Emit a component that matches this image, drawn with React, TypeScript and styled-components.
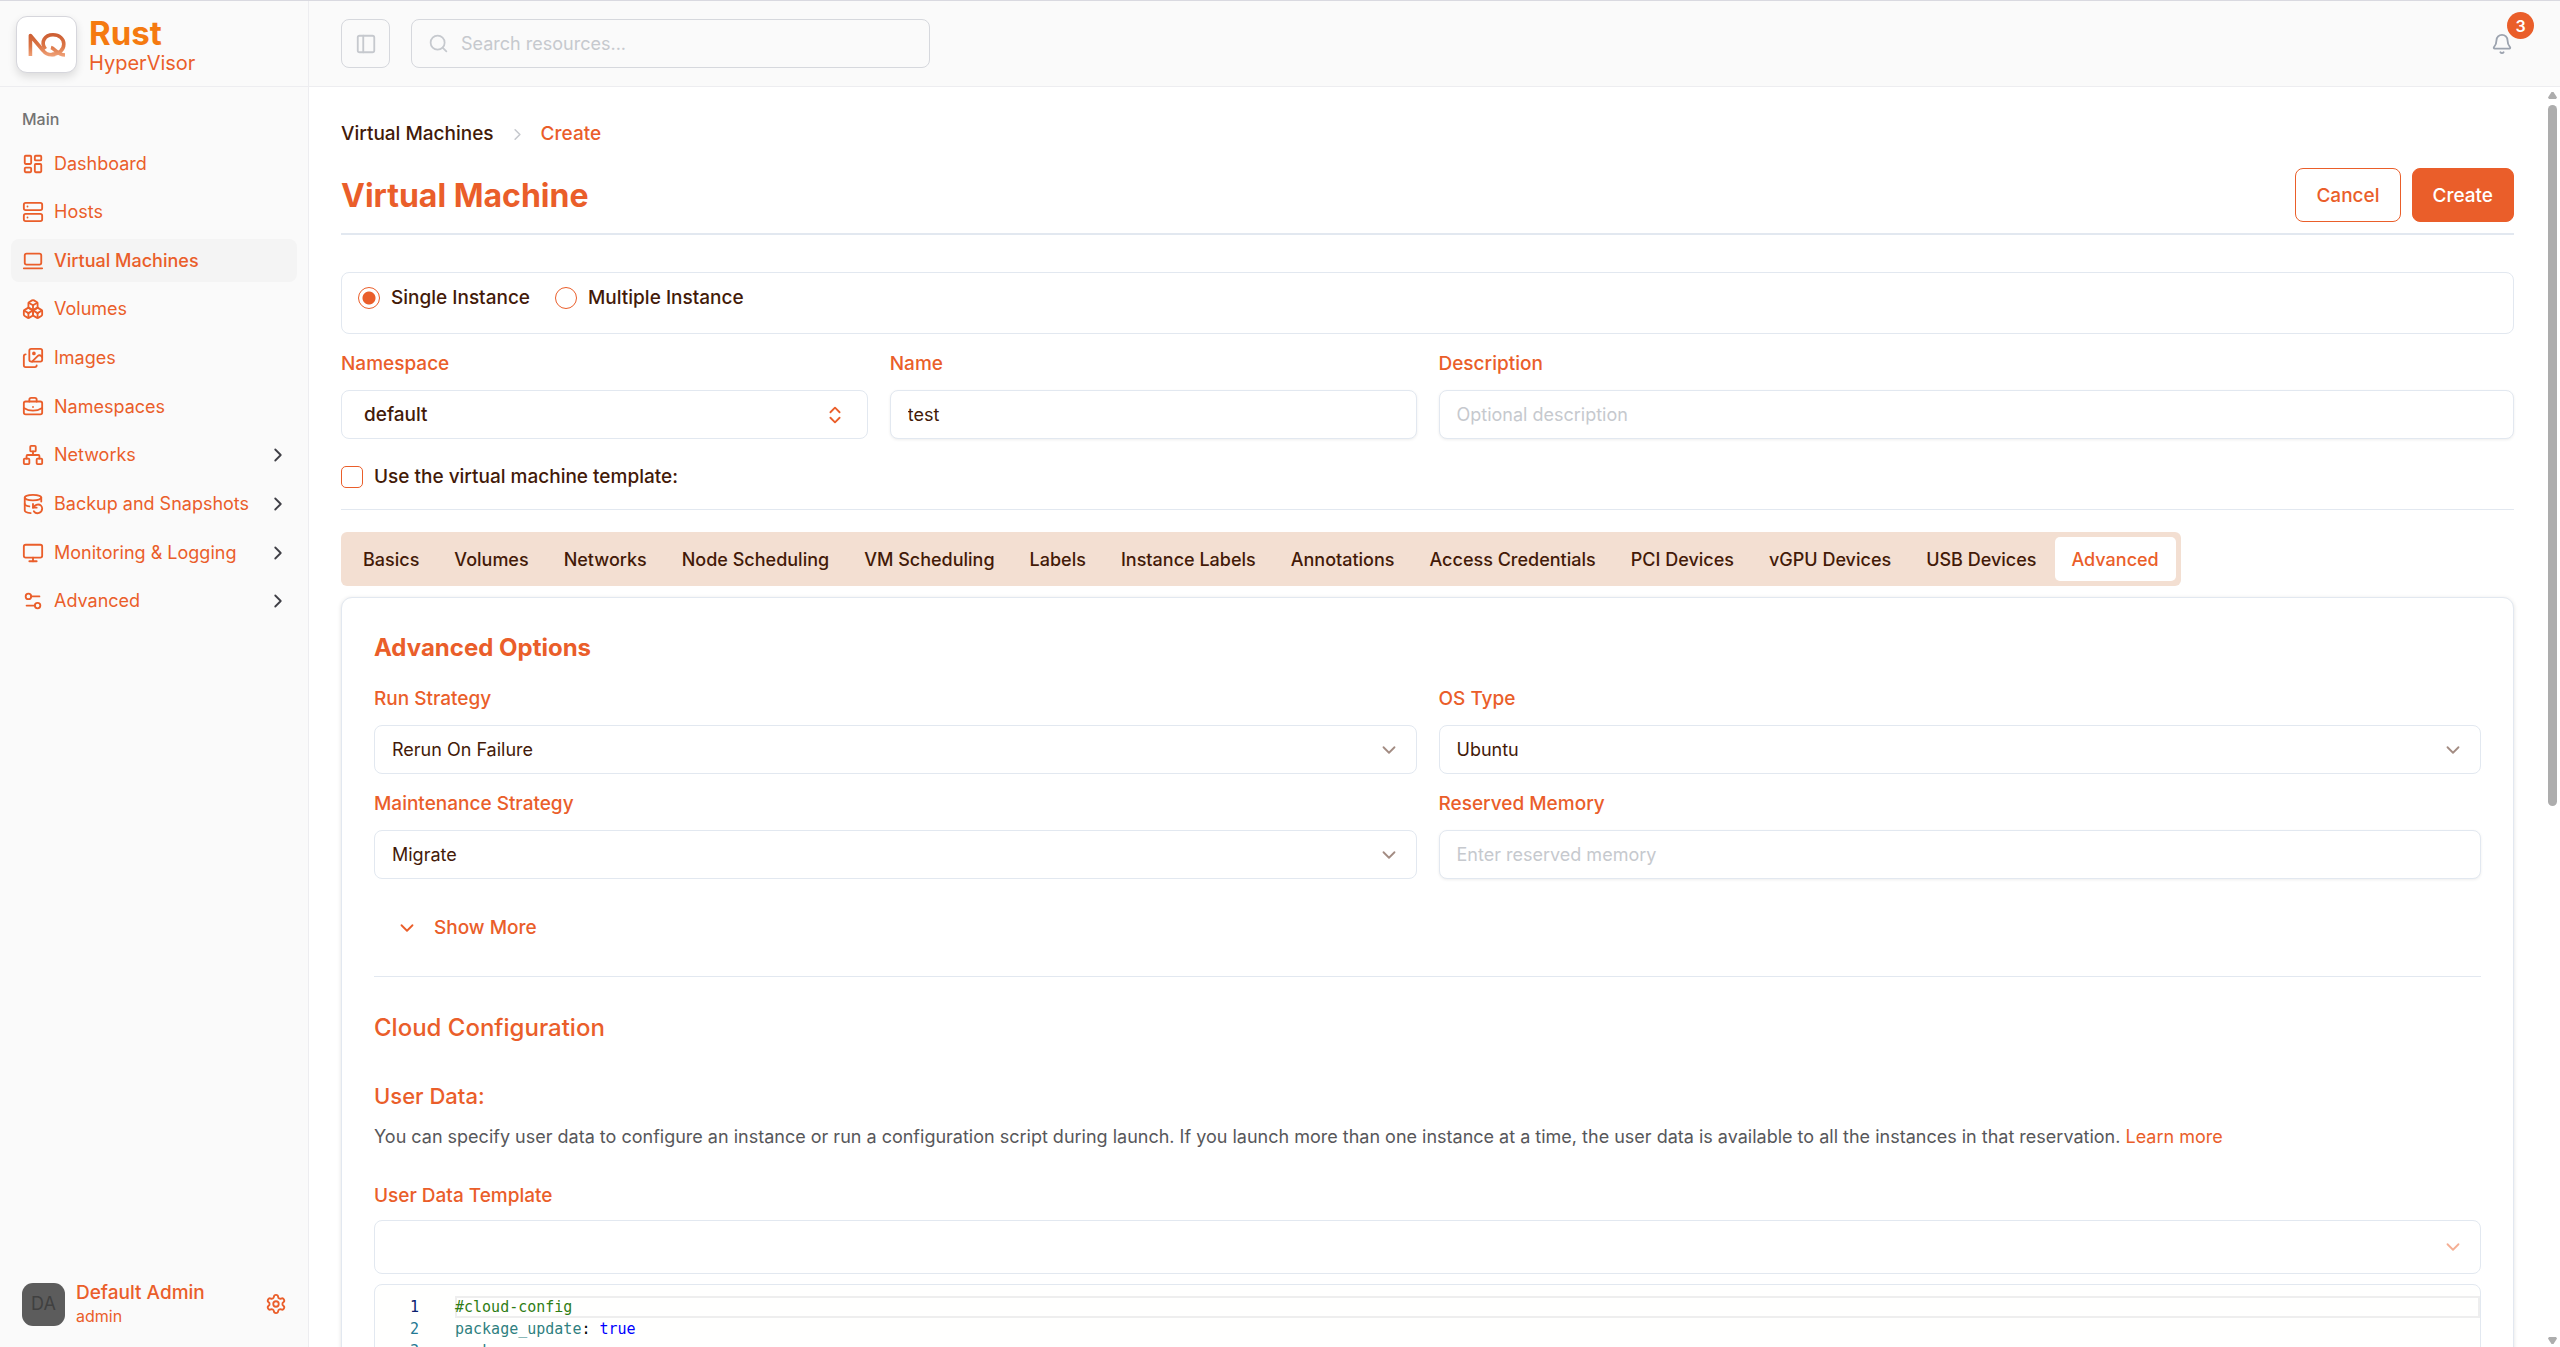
import React, { useState } from "react";
import styled, { createGlobalStyle } from "styled-components";
import {
  Bell,
  Boxes,
  BriefcaseBusiness,
  ChevronDown,
  ChevronRight,
  ChevronsUpDown,
  DatabaseBackup,
  Images,
  LaptopMinimal,
  LayoutDashboard,
  Monitor,
  Network,
  PanelLeft,
  Search,
  Server,
  Settings,
  Settings2,
  type LucideIcon,
} from "lucide-react";

const color = {
  accent: "#ea5e2a",
  brand: "#f57a10",
  ink: "#431a08",
  muted: "#737373",
  body: "#57575a",
  line: "#e2e8f0",
  chrome: "#fafafa",
  chromeLine: "#ededf0",
  faint: "#c6c9ce",
};

const GlobalStyle = createGlobalStyle`
  *, *::before, *::after { box-sizing: border-box; }
  body { margin: 0; background: #fff; }
  body, button, input, select {
    font-family: Inter, "Liberation Sans", sans-serif;
    font-size: 18px;
    line-height: 28px;
  }
  h1, h2, h3, p, ul, ol, nav { margin: 0; padding: 0; }
  ul, ol { list-style: none; }
  a { color: inherit; text-decoration: none; }
  svg { flex: none; }
`;

const Shell = styled.div`
  display: flex;
  height: 100vh;
  overflow: hidden;
  border-top: 1px solid #d9d9e0;
  color: ${color.ink};
`;

const Sidebar = styled.aside`
  display: flex;
  flex-direction: column;
  flex: none;
  width: 309px;
  background: ${color.chrome};
  border-right: 1px solid ${color.chromeLine};
`;

const Brand = styled.a`
  display: flex;
  align-items: center;
  gap: 12px;
  height: 86px;
  padding: 2px 16px 0;
  border-bottom: 1px solid ${color.chromeLine};
`;

const LogoTile = styled.span`
  display: grid;
  place-items: center;
  width: 61px;
  height: 57px;
  border: 1px solid #d6d6dc;
  border-radius: 11px;
  background: #fff;
  box-shadow: 0 4px 8px rgba(0, 0, 0, 0.12);
`;

const BrandText = styled.span`
  display: flex;
  flex-direction: column;
  padding-top: 4px;
`;

const BrandName = styled.strong`
  color: ${color.brand};
  font-size: 33px;
  font-weight: 700;
  line-height: 32px;
`;

const BrandSub = styled.span`
  color: ${color.accent};
  font-size: 20px;
  line-height: 28px;
`;

const NavGroup = styled.nav`
  flex: 1;
  padding: 18px 11px;
`;

const NavHeading = styled.div`
  padding: 0 11px 9px;
  color: ${color.muted};
  font-size: 16px;
  font-weight: 500;
`;

const NavList = styled.ul`
  display: flex;
  flex-direction: column;
  justify-content: space-between;
  height: 481px;
`;

const NavLink = styled.a<{ $active?: boolean }>`
  display: flex;
  align-items: center;
  gap: 10px;
  height: 43px;
  padding: 0 8px 0 11px;
  border-radius: 8px;
  color: ${color.accent};
  font-weight: ${(p) => (p.$active ? 500 : 400)};
  background: ${(p) => (p.$active ? "#f4f4f4" : "transparent")};
  white-space: nowrap;

  span { flex: 1; }
  svg:last-child:not(:first-child) { color: #3f3f46; }
`;

const Account = styled.div`
  display: flex;
  align-items: center;
  gap: 11px;
  padding: 0 21px 20px 22px;
  color: ${color.accent};
`;

const Avatar = styled.span`
  display: grid;
  place-items: center;
  width: 43px;
  height: 43px;
  border-radius: 11px;
  background: #5c5c5c;
  color: #404040;
`;

const AccountText = styled.div`
  display: flex;
  flex: 1;
  flex-direction: column;
  font-size: 19px;
  font-weight: 500;
  line-height: 24px;

  small {
    font-size: 16px;
    font-weight: 400;
    line-height: 22px;
  }
`;

const IconButton = styled.button<{ $framed?: boolean }>`
  display: grid;
  place-items: center;
  width: ${(p) => (p.$framed ? "49px" : "22px")};
  height: ${(p) => (p.$framed ? "49px" : "22px")};
  padding: 0;
  border: ${(p) => (p.$framed ? "1px solid #d6d8dd" : "0")};
  border-radius: 8px;
  background: transparent;
  color: inherit;
`;

const Column = styled.div`
  display: flex;
  flex: 1;
  flex-direction: column;
  min-width: 0;
`;

const TopBar = styled.header`
  display: flex;
  flex: none;
  align-items: center;
  gap: 21px;
  height: 86px;
  padding: 0 47px 0 32px;
  background: ${color.chrome};
  border-bottom: 1px solid ${color.chromeLine};
  color: ${color.faint};
`;

const SearchBox = styled.label`
  display: flex;
  align-items: center;
  gap: 12px;
  width: 519px;
  height: 49px;
  padding: 0 16px;
  border: 1px solid #d6d8dd;
  border-radius: 8px;

  input {
    flex: 1;
    min-width: 0;
    padding: 0;
    border: 0;
    outline: 0;
    background: transparent;
    color: ${color.ink};
  }
  input::placeholder { color: ${color.faint}; }
`;

const Alerts = styled.div`
  position: relative;
  margin-left: auto;
  color: #9ca3af;
`;

const Badge = styled.span`
  position: absolute;
  left: 16px;
  bottom: 16px;
  display: grid;
  place-items: center;
  width: 27px;
  height: 27px;
  border-radius: 50%;
  background: ${color.accent};
  color: #fff;
  font-size: 16px;
  font-weight: 600;
`;

const Viewport = styled.div`
  display: flex;
  flex: 1;
  min-height: 0;
`;

const Main = styled.main`
  flex: 1;
  min-width: 0;
  overflow: hidden;
  padding: 33px 31px 0 32px;
`;

const ScrollTrack = styled.div`
  display: flex;
  flex: none;
  flex-direction: column;
  align-items: center;
  gap: 6px;
  width: 15px;
  padding: 5px 0 3px;
  color: #adadad;

  svg:last-child { margin-top: auto; }
`;

const ScrollThumb = styled.div`
  width: 9px;
  height: 56%;
  border-radius: 5px;
  background: currentColor;
`;

const Crumbs = styled.ol`
  display: flex;
  align-items: center;
  gap: 14px;
  font-size: 19px;
  font-weight: 500;

  svg { display: block; color: ${color.faint}; }
  [aria-current] { color: ${color.accent}; }
`;

const TitleRow = styled.div`
  display: flex;
  align-items: center;
  justify-content: space-between;
  margin-top: 20px;
  padding-bottom: 11px;
  border-bottom: 2px solid ${color.line};

  h1 {
    padding-top: 2px;
    color: ${color.accent};
    font-size: 32px;
    font-weight: 700;
    line-height: 44px;
  }
`;

const Actions = styled.div`
  display: flex;
  gap: 11px;
`;

const Button = styled.button<{ $primary?: boolean }>`
  height: 54px;
  padding: 2px 20px 0;
  border: 1px solid ${color.accent};
  border-radius: 8px;
  background: ${(p) => (p.$primary ? color.accent : "#fff")};
  color: ${(p) => (p.$primary ? "#fff" : color.accent)};
  font-size: 19px;
  font-weight: 500;
`;

const InstanceBox = styled.fieldset`
  display: flex;
  align-items: flex-start;
  gap: 25px;
  height: 62px;
  margin: 37px 0 16px;
  padding: 11px 16px;
  border: 1px solid ${color.line};
  border-radius: 8px;
`;

const Choice = styled.label`
  display: flex;
  align-items: center;
  gap: 11px;
  font-size: 19px;
  font-weight: 500;

  input {
    appearance: none;
    flex: none;
    width: 22px;
    height: 22px;
    margin: 0;
    border: 1px solid ${color.accent};
    background: #fff;
  }
  input[type="radio"] { border-radius: 50%; }
  input[type="checkbox"] { border-radius: 5px; }
  input[type="radio"]:checked {
    background: radial-gradient(circle, ${color.accent} 6px, #fff 7px);
  }
  input[type="checkbox"]:checked { background: ${color.accent}; }
`;

const TemplateRow = styled.div`
  margin-bottom: 22px;
  padding: 24px 0 18px;
  border-bottom: 1px solid ${color.line};
`;

const FieldGrid = styled.div<{ $columns: number }>`
  display: grid;
  grid-template-columns: repeat(${(p) => p.$columns}, minmax(0, 1fr));
  gap: 16px 22px;
`;

const Field = styled.div<{ $span?: number; $gap?: number }>`
  display: flex;
  flex-direction: column;
  gap: ${(p) => p.$gap ?? 12}px;
  grid-column: span ${(p) => p.$span ?? 1};

  label {
    color: ${color.accent};
    font-size: 19px;
    font-weight: 500;
  }
`;

const TextInput = styled.input`
  width: 100%;
  height: 49px;
  padding: 0 17px;
  border: 1px solid ${color.line};
  border-radius: 8px;
  background: #fff;
  color: ${color.ink};
  box-shadow: 0 1px 3px rgba(0, 0, 0, 0.07);
  outline: 0;

  &::placeholder { color: ${color.faint}; opacity: 1; }
`;

const SelectFrame = styled.div<{ $tone: string; $inset: number }>`
  position: relative;

  svg {
    position: absolute;
    top: 50%;
    right: ${(p) => p.$inset}px;
    transform: translateY(-50%);
    color: ${(p) => p.$tone};
    pointer-events: none;
  }
`;

const SelectControl = styled.select<{ $tall?: boolean; $pad?: number; $medium?: boolean }>`
  display: block;
  appearance: none;
  width: 100%;
  height: ${(p) => (p.$tall ? 54 : 49)}px;
  padding: 0 ${(p) => p.$pad ?? 17}px;
  border: 1px solid ${color.line};
  border-radius: 8px;
  background: #fff;
  color: ${color.ink};
  font-size: ${(p) => (p.$medium ? 19 : 18)}px;
  font-weight: ${(p) => (p.$medium ? 500 : 400)};
  outline: 0;
`;

const TabList = styled.div`
  display: flex;
  gap: 1px;
  width: fit-content;
  padding: 5px;
  border-radius: 6px;
  background: #f3dfd2;
`;

const Tab = styled.button<{ $active?: boolean }>`
  height: 44px;
  padding: 2px 17px 0;
  border: 0;
  border-radius: 5px;
  background: ${(p) => (p.$active ? "#fff" : "transparent")};
  color: ${(p) => (p.$active ? color.accent : color.ink)};
  font-weight: 500;
  white-space: nowrap;
`;

const Card = styled.section`
  margin-top: 11px;
  padding: 34px 32px;
  border: 1px solid ${color.line};
  border-radius: 11px;
  background: #fff;
  box-shadow: 0 1px 4px rgba(0, 0, 0, 0.12);
`;

const SectionTitle = styled.h2<{ $strong?: boolean }>`
  color: ${color.accent};
  font-size: 24px;
  font-weight: ${(p) => (p.$strong ? 700 : 500)};
  line-height: 32px;
  margin-bottom: ${(p) => (p.$strong ? 21 : 37)}px;
`;

const ShowMore = styled.button`
  display: flex;
  align-items: center;
  gap: 16px;
  height: 48px;
  margin: 25px 0 24px;
  padding: 0 22px;
  border: 0;
  background: transparent;
  color: ${color.accent};
  font-size: 19px;
  font-weight: 500;
`;

const Divider = styled.hr`
  height: 1px;
  margin: 0 0 35px;
  border: 0;
  background: ${color.line};
`;

const SubTitle = styled.h3`
  margin-bottom: 12px;
  color: ${color.accent};
  font-size: 22px;
  font-weight: 500;
  line-height: 30px;
`;

const Hint = styled.p`
  margin-bottom: 31px;
  color: ${color.body};

  a { color: ${color.accent}; }
`;

const Editor = styled.div`
  margin-top: 10px;
  padding: 11px 0;
  border: 1px solid ${color.line};
  border-radius: 8px;
  background: #fffffe;
  font-family: "DejaVu Sans Mono", monospace;
  font-size: 15px;
`;

const CodeLine = styled.div<{ $current?: boolean }>`
  display: grid;
  grid-template-columns: 44px 1fr;
  column-gap: 36px;
  line-height: 22px;

  > span {
    color: ${(p) => (p.$current ? "#0b216f" : "#237893")};
    text-align: right;
  }
  > code {
    font: inherit;
    box-shadow: ${(p) => (p.$current ? "inset 0 0 0 2px #eee" : "none")};
  }
`;

const Token = styled.span<{ $kind: "comment" | "key" | "value" | "plain" }>`
  color: ${(p) => ({ comment: "#2f7d15", key: "#2f7f80", value: "#0000ff", plain: "#000" })[p.$kind]};
`;

const navItems: { label: string; icon: LucideIcon; active?: boolean; nested?: boolean }[] = [
  { label: "Dashboard", icon: LayoutDashboard },
  { label: "Hosts", icon: Server },
  { label: "Virtual Machines", icon: LaptopMinimal, active: true },
  { label: "Volumes", icon: Boxes },
  { label: "Images", icon: Images },
  { label: "Namespaces", icon: BriefcaseBusiness },
  { label: "Networks", icon: Network, nested: true },
  { label: "Backup and Snapshots", icon: DatabaseBackup, nested: true },
  { label: "Monitoring & Logging", icon: Monitor, nested: true },
  { label: "Advanced", icon: Settings2, nested: true },
];

const tabs = [
  "Basics",
  "Volumes",
  "Networks",
  "Node Scheduling",
  "VM Scheduling",
  "Labels",
  "Instance Labels",
  "Annotations",
  "Access Credentials",
  "PCI Devices",
  "vGPU Devices",
  "USB Devices",
  "Advanced",
];

function Logo() {
  return (
    <svg width="38" height="26" viewBox="0 0 38 26" fill="none" aria-hidden="true">
      <defs>
        <linearGradient id="logo-fill" x1="0" y1="0" x2="0" y2="26" gradientUnits="userSpaceOnUse">
          <stop offset="0" stopColor="#c95a30" />
          <stop offset="0.55" stopColor="#dc7646" />
          <stop offset="1" stopColor="#f3a981" />
        </linearGradient>
      </defs>
      <g stroke="url(#logo-fill)" strokeWidth="3.6" strokeLinejoin="round">
        <path d="M2.4 24V3.5L15 18.500C18 22.500 22 23.500 27 22.400" />
        <path d="M17.500 17C12 10 17 2.800 25 2.800C31.500 2.800 35.800 7 35.800 12C35.800 18 31 22.400 23.500 22.400" />
        <path d="M23 15.500C27 16.500 29 22.800 37 23" />
      </g>
    </svg>
  );
}

function Arrow({ down }: { down?: boolean }) {
  return (
    <svg width="9" height="7" viewBox="0 0 9 7" aria-hidden="true">
      <path
        d={down ? "M1 0h7l1 1.500L5.500 7h-2L0 1.500z" : "M1 7h7l1-1.500L5.500 0h-2L0 5.500z"}
        fill="currentColor"
      />
    </svg>
  );
}

interface SelectProps {
  id: string;
  label: string;
  value: string;
  tone?: string;
  tall?: boolean;
}

function SelectField({ id, label, value, tone = "#a38c83", tall }: SelectProps) {
  return (
    <Field $gap={tall ? 10 : 12}>
      <label htmlFor={id}>{label}</label>
      <SelectFrame $tone={tone} $inset={17}>
        <SelectControl id={id} $tall={tall} defaultValue={value}>
          <option value={value}>{value}</option>
        </SelectControl>
        <ChevronDown size={22} strokeWidth={2} />
      </SelectFrame>
    </Field>
  );
}

export default function App() {
  const [mode, setMode] = useState("single");
  const [tab, setTab] = useState("Advanced");

  return (
    <Shell>
      <GlobalStyle />
      <Sidebar>
        <Brand href="#home">
          <LogoTile>
            <Logo />
          </LogoTile>
          <BrandText>
            <BrandName>Rust</BrandName>
            <BrandSub>HyperVisor</BrandSub>
          </BrandText>
        </Brand>
        <NavGroup aria-label="Main">
          <NavHeading>Main</NavHeading>
          <NavList>
            {navItems.map(({ label, icon: Icon, active, nested }) => (
              <li key={label}>
                <NavLink href="#nav" $active={active}>
                  <Icon size={22} />
                  <span>{label}</span>
                  {nested && <ChevronRight size={22} />}
                </NavLink>
              </li>
            ))}
          </NavList>
        </NavGroup>
        <Account>
          <Avatar>DA</Avatar>
          <AccountText>
            Default Admin
            <small>admin</small>
          </AccountText>
          <IconButton aria-label="Settings">
            <Settings size={22} />
          </IconButton>
        </Account>
      </Sidebar>

      <Column>
        <TopBar>
          <IconButton $framed aria-label="Toggle sidebar">
            <PanelLeft size={22} strokeWidth={2} />
          </IconButton>
          <SearchBox>
            <Search size={21} />
            <input type="search" aria-label="Search resources" placeholder="Search resources..." />
          </SearchBox>
          <Alerts>
            <IconButton aria-label="Notifications">
              <Bell size={22} />
            </IconButton>
            <Badge>3</Badge>
          </Alerts>
        </TopBar>

        <Viewport>
          <Main>
            <nav aria-label="Breadcrumb">
              <Crumbs>
                <li>
                  <a href="#vms">Virtual Machines</a>
                </li>
                <li aria-hidden="true">
                  <ChevronRight size={19} />
                </li>
                <li aria-current="page">Create</li>
              </Crumbs>
            </nav>

            <TitleRow>
              <h1>Virtual Machine</h1>
              <Actions>
                <Button type="button">Cancel</Button>
                <Button type="button" $primary>
                  Create
                </Button>
              </Actions>
            </TitleRow>

            <InstanceBox aria-label="Instance count">
              <Choice>
                <input type="radio" name="mode" checked={mode === "single"} onChange={() => setMode("single")} />
                Single Instance
              </Choice>
              <Choice>
                <input type="radio" name="mode" checked={mode === "multiple"} onChange={() => setMode("multiple")} />
                Multiple Instance
              </Choice>
            </InstanceBox>

            <FieldGrid $columns={4}>
              <Field>
                <label htmlFor="namespace">Namespace</label>
                <SelectFrame $tone={color.accent} $inset={22}>
                  <SelectControl id="namespace" $pad={22} $medium defaultValue="default">
                    <option value="default">default</option>
                  </SelectControl>
                  <ChevronsUpDown size={22} />
                </SelectFrame>
              </Field>
              <Field>
                <label htmlFor="name">Name</label>
                <TextInput id="name" defaultValue="test" />
              </Field>
              <Field $span={2}>
                <label htmlFor="description">Description</label>
                <TextInput id="description" placeholder="Optional description" />
              </Field>
            </FieldGrid>

            <TemplateRow>
              <Choice>
                <input type="checkbox" />
                Use the virtual machine template:
              </Choice>
            </TemplateRow>

            <TabList role="tablist">
              {tabs.map((name) => (
                <Tab key={name} role="tab" aria-selected={tab === name} $active={tab === name} onClick={() => setTab(name)}>
                  {name}
                </Tab>
              ))}
            </TabList>

            <Card>
              <SectionTitle $strong>Advanced Options</SectionTitle>
              <FieldGrid $columns={2}>
                <SelectField id="run-strategy" label="Run Strategy" value="Rerun On Failure" />
                <SelectField id="os-type" label="OS Type" value="Ubuntu" />
                <SelectField id="maintenance" label="Maintenance Strategy" value="Migrate" />
                <Field>
                  <label htmlFor="memory">Reserved Memory</label>
                  <TextInput id="memory" placeholder="Enter reserved memory" />
                </Field>
              </FieldGrid>

              <ShowMore type="button">
                <ChevronDown size={22} />
                Show More
              </ShowMore>
              <Divider />

              <SectionTitle>Cloud Configuration</SectionTitle>
              <SubTitle>User Data:</SubTitle>
              <Hint>
                You can specify user data to configure an instance or run a configuration script during launch. If you
                launch more than one instance at a time, the user data is available to all the instances in that
                reservation. <a href="#learn-more">Learn more</a>
              </Hint>

              <SelectField id="user-data-template" label="User Data Template" value="" tone="#f5af94" tall />

              <Editor>
                <CodeLine $current>
                  <span>1</span>
                  <code>
                    <Token $kind="comment">#cloud-config</Token>
                  </code>
                </CodeLine>
                <CodeLine>
                  <span>2</span>
                  <code>
                    <Token $kind="key">package_update</Token>
                    <Token $kind="plain">: </Token>
                    <Token $kind="value">true</Token>
                  </code>
                </CodeLine>
                <CodeLine>
                  <span>3</span>
                  <code>
                    <Token $kind="key">packages</Token>
                    <Token $kind="plain">:</Token>
                  </code>
                </CodeLine>
              </Editor>
            </Card>
          </Main>
          <ScrollTrack aria-hidden="true">
            <Arrow />
            <ScrollThumb />
            <Arrow down />
          </ScrollTrack>
        </Viewport>
      </Column>
    </Shell>
  );
}
